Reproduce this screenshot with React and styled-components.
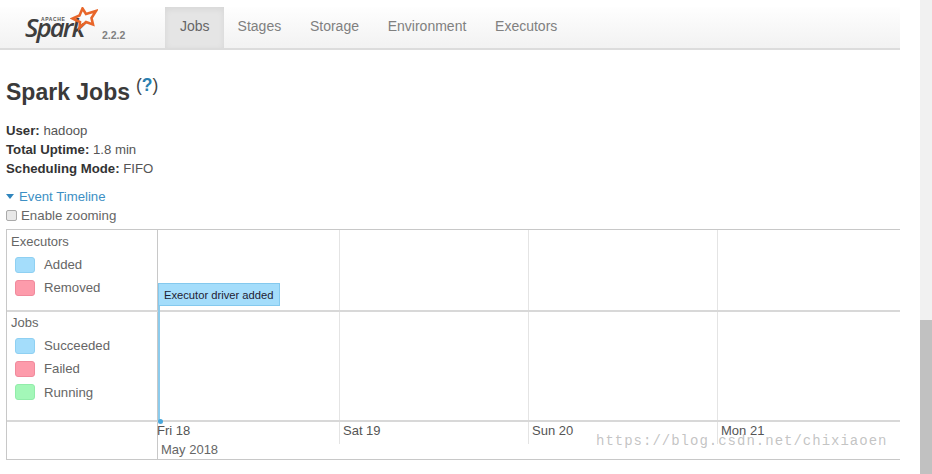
import React from "react";
import styled, { createGlobalStyle } from "styled-components";

const Global = createGlobalStyle`
  html, body { margin: 0; padding: 0; background: #fff; overflow: hidden; }
  body { font-family: "Liberation Sans", Arial, sans-serif; color: #333; }
`;

const Page = styled.div`
  position: relative;
  width: 932px;
  height: 474px;
  display: flex;
  overflow: hidden;
`;
const Main = styled.div`
  width: 900px;
  flex: none;
`;
const Track = styled.div`
  margin-left: 20px;
  width: 12px;
  background: #f1f1f1;
  display: flex;
  flex-direction: column;
  justify-content: flex-end;
`;
const Thumb = styled.div`
  height: 154px;
  background: #c1c1c1;
`;

const Navbar = styled.nav`
  height: 43px;
  margin-top: 7px;
  box-sizing: border-box;
  padding-left: 25px;
  display: flex;
  background: linear-gradient(#fefefe, #f2f2f2);
  border-bottom: 2px solid #dcdcdc;
`;
const Brand = styled.div`
  position: relative;
  width: 140px;
  flex: none;
`;
const BrandName = styled.span`
  position: absolute;
  left: 0;
  top: 5px;
  font: italic 600 26px/30px "Open Sans", "Liberation Sans", sans-serif;
  letter-spacing: -2px;
  color: #3e3e3e;
`;
const BrandTop = styled.span`
  position: absolute;
  left: 16px;
  top: 9px;
  font: bold 5px/6px "Liberation Sans", sans-serif;
  letter-spacing: 0.6px;
  color: #555;
`;
const BrandStar = styled.svg`
  position: absolute;
  left: 45px;
  top: 0;
`;
const BrandVersion = styled.span`
  position: absolute;
  left: 77px;
  top: 22px;
  font: bold 10.5px/12px "Liberation Sans", sans-serif;
  color: #808080;
`;
const Tab = styled.a`
  height: 41px;
  box-sizing: border-box;
  padding: 0 14px 4px ${(p) => (p.$active ? 15 : 14)}px;
  margin-right: ${(p) => (p.$active ? 0 : 0.75)}px;
  display: flex;
  align-items: center;
  font-size: 14px;
  color: ${(p) => (p.$active ? "#666" : "#808080")};
  background: ${(p) => (p.$active ? "#e5e5e5" : "transparent")};
  box-shadow: ${(p) => (p.$active ? "inset 0 2px 6px rgba(0,0,0,.07)" : "none")};
`;

const Content = styled.div`
  padding-left: 6px;
`;
const Title = styled.h3`
  margin: 27px 0 0;
  height: 29px;
  font-size: 23px;
  line-height: 30px;
  font-weight: bold;
  color: #3a3a3a;
  display: flex;
`;
const Help = styled.sup`
  margin-left: 6px;
  margin-top: -3px;
  font-size: 17.5px;
  line-height: 22px;
  font-weight: normal;
  vertical-align: baseline;
  color: #444;
  b { color: #2a7fb0; }
`;
const Info = styled.ul`
  margin: 15px 0 0;
  padding: 0;
  list-style: none;
  font-size: 13.2px;
  line-height: 19px;
  color: #555;
  strong { color: #333; }
`;
const TimelineLink = styled.div`
  margin-top: 9px;
  height: 19px;
  display: flex;
  align-items: center;
  gap: 5px;
  font-size: 13.2px;
  color: #3d8fc4;
`;
const Caret = styled.span`
  width: 0;
  height: 0;
  border-left: 4.5px solid transparent;
  border-right: 4.5px solid transparent;
  border-top: 5px solid #2f85bd;
`;
const Zoom = styled.label`
  height: 19px;
  display: flex;
  align-items: center;
  gap: 4px;
  font-size: 13.3px;
  color: #666;
`;
const Check = styled.span`
  width: 9px;
  height: 9px;
  border: 1px solid #aaa;
  border-radius: 2px;
  background: #e8e8e8;
`;

const Timeline = styled.div`
  position: relative;
  margin-top: 4px;
  width: 894px;
  box-sizing: border-box;
  border: 1px solid #c8c8c8;
  border-right: none;
  display: grid;
  grid-template-columns: 151px 1fr;
  grid-template-rows: 82px 110px 37px;
`;
const Labels = styled.div`
  box-sizing: border-box;
  padding: ${(p) => p.$top ?? 4}px 0 0 4px;
  border-right: 1px solid #c8c8c8;
  border-bottom: ${(p) => (p.$last ? "none" : "2px solid #d8d8d8")};
  color: #666;
`;
const GroupName = styled.div`
  font-size: 13px;
  line-height: 16px;
  margin-bottom: 3px;
`;
const Legend = styled.div`
  height: 23.3px;
  padding-left: 4px;
  display: flex;
  align-items: center;
  gap: 9px;
  font-size: 13.2px;
`;
const Swatch = styled.span`
  width: 20px;
  height: 16px;
  border-radius: 3px;
  background: ${(p) => p.$c};
  border: 1px solid ${(p) => p.$b};
  box-sizing: border-box;
`;
const Ticks = styled.div`
  display: grid;
  grid-template-columns: 182px 189px 189px 1fr;
  box-sizing: border-box;
  border-bottom: ${(p) => (p.$last ? "none" : "2px solid #d8d8d8")};
`;
const Tick = styled.div`
  border-right: ${(p) => (p.$end ? "none" : "1px solid #e4e4e4")};
`;
const AxisTick = styled.div`
  height: 22px;
  box-sizing: border-box;
  padding: 1px 0 0 ${(p) => (p.$first ? 0 : 3)}px;
  font-size: 13px;
  line-height: 16px;
  color: #555;
  white-space: nowrap;
  margin-left: ${(p) => (p.$first ? -1 : 0)}px;
  border-right: ${(p) => (p.$end ? "none" : "1px solid #e4e4e4")};
`;
const Month = styled.div`
  position: absolute;
  left: 154px;
  top: 212px;
  font-size: 13px;
  line-height: 16px;
  color: #666;
`;
const Event = styled.div`
  position: absolute;
  left: 151px;
  top: 53px;
  width: 122px;
  height: 23px;
  box-sizing: border-box;
  background: #a4ddfb;
  border: 1px solid #84c9ee;
  font-size: 11.2px;
  line-height: 22px;
  padding-left: 5px;
  white-space: nowrap;
  color: #223;
`;
const Stem = styled.div`
  position: absolute;
  left: 151px;
  top: 76px;
  width: 2px;
  height: 115px;
  background: #8ccbec;
`;
const Dot = styled.div`
  position: absolute;
  left: 151px;
  top: 189px;
  width: 5px;
  height: 5px;
  border-radius: 50%;
  background: #4aa8dc;
`;
const Watermark = styled.div`
  position: absolute;
  left: 596px;
  top: 433px;
  font: 14px/17px "Liberation Mono", monospace;
  letter-spacing: 1px;
  color: rgba(170, 170, 170, 0.7);
  white-space: nowrap;
`;

const BLUE = ["#a4ddfb", "#8fd0f2"];
const RED = ["#fd9bab", "#f08a9c"];
const GREEN = ["#a3f7b8", "#92ecaa"];

const Item = ({ c, children }) => (
  <Legend>
    <Swatch $c={c[0]} $b={c[1]} />
    {children}
  </Legend>
);

const Columns = ({ last }) => (
  <Ticks $last={last}>
    <Tick />
    <Tick />
    <Tick />
    <Tick $end />
  </Ticks>
);

export default function App() {
  return (
    <Page>
      <Global />
      <Main>
        <Navbar>
          <Brand>
            <BrandTop>APACHE</BrandTop>
            <BrandName>Spark</BrandName>
            <BrandStar width="28" height="24" viewBox="0 0 28 24">
              <path
                d="M12.5 1.5 L16 7 L26 4 L21.5 11 L23 17.5 L16 15 L9.5 21 L10 15 L2.5 11.5 L9.5 8.5 Z"
                fill="none"
                stroke="#e8662a"
                strokeWidth="2.6"
                strokeLinejoin="miter"
              />
            </BrandStar>
            <BrandVersion>2.2.2</BrandVersion>
          </Brand>
          <Tab $active>Jobs</Tab>
          <Tab>Stages</Tab>
          <Tab>Storage</Tab>
          <Tab>Environment</Tab>
          <Tab>Executors</Tab>
        </Navbar>
        <Content>
          <Title>
            Spark Jobs
            <Help>
              (<b>?</b>)
            </Help>
          </Title>
          <Info>
            <li>
              <strong>User:</strong> hadoop
            </li>
            <li>
              <strong>Total Uptime:</strong> 1.8 min
            </li>
            <li>
              <strong>Scheduling Mode:</strong> FIFO
            </li>
          </Info>
          <TimelineLink>
            <Caret />
            Event Timeline
          </TimelineLink>
          <Zoom>
            <Check />
            Enable zooming
          </Zoom>
          <Timeline>
            <Labels>
              <GroupName>Executors</GroupName>
              <Item c={BLUE}>Added</Item>
              <Item c={RED}>Removed</Item>
            </Labels>
            <Columns />
            <Labels $top={3}>
              <GroupName>Jobs</GroupName>
              <Item c={BLUE}>Succeeded</Item>
              <Item c={RED}>Failed</Item>
              <Item c={GREEN}>Running</Item>
            </Labels>
            <Columns />
            <Labels $last />
            <Ticks $last>
              <AxisTick $first>Fri 18</AxisTick>
              <AxisTick>Sat 19</AxisTick>
              <AxisTick>Sun 20</AxisTick>
              <AxisTick $end>Mon 21</AxisTick>
            </Ticks>
            <Event>Executor driver added</Event>
            <Stem />
            <Dot />
            <Month>May 2018</Month>
          </Timeline>
        </Content>
      </Main>
      <Track>
        <Thumb />
      </Track>
      <Watermark>https://blog.csdn.net/chixiaoen</Watermark>
    </Page>
  );
}
